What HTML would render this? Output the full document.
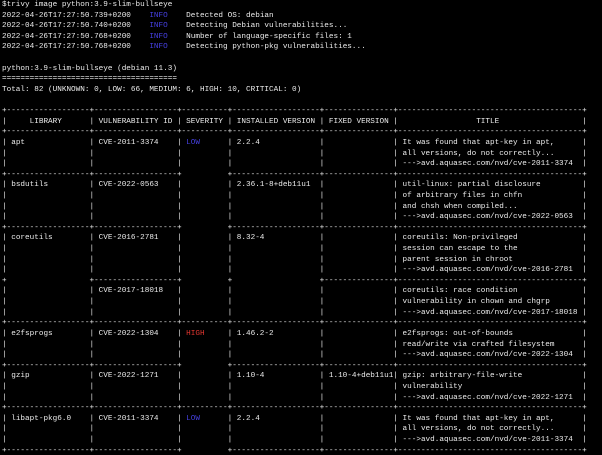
<!DOCTYPE html>
<html><head><meta charset="utf-8"><style>
html,body{margin:0;padding:0;background:#000;width:602px;height:455px;overflow:hidden}
body{padding-left:2px;font-family:"Liberation Mono",monospace;font-size:7.68px;line-height:10.61px;color:#ececec}
div{height:10.61px;white-space:pre}
i{font-style:normal;display:inline-block;white-space:pre}
.a,.b{width:18ch}.c{width:10ch}.d{width:19ch}.e{width:15ch}.f{width:40ch}
.bl{color:#4540e0}.rd{color:#e0352f}
</style></head><body>
<div>$trivy image python:3.9-slim-bullseye</div>
<div>2022-04-26T17:27:50.739+0200    <span class="bl">INFO</span>    Detected OS: debian</div>
<div>2022-04-26T17:27:50.740+0200    <span class="bl">INFO</span>    Detecting Debian vulnerabilities...</div>
<div>2022-04-26T17:27:50.768+0200    <span class="bl">INFO</span>    Number of language-specific files: 1</div>
<div>2022-04-26T17:27:50.768+0200    <span class="bl">INFO</span>    Detecting python-pkg vulnerabilities...</div>
<div> </div>
<div>python:3.9-slim-bullseye (debian 11.3)</div>
<div>======================================</div>
<div>Total: 82 (UNKNOWN: 0, LOW: 66, MEDIUM: 6, HIGH: 10, CRITICAL: 0)</div>
<div> </div>
<div>+------------------+------------------+----------+-------------------+---------------+----------------------------------------+</div>
<div>|<i class="a">     LIBRARY</i>|<i class="b"> VULNERABILITY ID</i>|<i class="c"> SEVERITY</i>|<i class="d"> INSTALLED VERSION</i>|<i class="e"> FIXED VERSION</i>|<i class="f">                 TITLE</i>|</div>
<div>+------------------+------------------+----------+-------------------+---------------+----------------------------------------+</div>
<div>|<i class="a"> apt</i>|<i class="b"> CVE-2011-3374</i>|<i class="c"> <span class="bl">LOW</span></i>|<i class="d"> 2.2.4</i>|<i class="e"> </i>|<i class="f"> It was found that apt-key in apt,</i>|</div>
<div>|<i class="a"> </i>|<i class="b"> </i>|<i class="c"> </i>|<i class="d"> </i>|<i class="e"> </i>|<i class="f"> all versions, do not correctly...</i>|</div>
<div>|<i class="a"> </i>|<i class="b"> </i>|<i class="c"> </i>|<i class="d"> </i>|<i class="e"> </i>|<i class="f"> --->avd.aquasec.com/nvd/cve-2011-3374</i>|</div>
<div>+------------------+------------------+<i class="c"> </i>+-------------------+---------------+----------------------------------------+</div>
<div>|<i class="a"> bsdutils</i>|<i class="b"> CVE-2022-0563</i>|<i class="c"> </i>|<i class="d"> 2.36.1-8+deb11u1</i>|<i class="e"> </i>|<i class="f"> util-linux: partial disclosure</i>|</div>
<div>|<i class="a"> </i>|<i class="b"> </i>|<i class="c"> </i>|<i class="d"> </i>|<i class="e"> </i>|<i class="f"> of arbitrary files in chfn</i>|</div>
<div>|<i class="a"> </i>|<i class="b"> </i>|<i class="c"> </i>|<i class="d"> </i>|<i class="e"> </i>|<i class="f"> and chsh when compiled...</i>|</div>
<div>|<i class="a"> </i>|<i class="b"> </i>|<i class="c"> </i>|<i class="d"> </i>|<i class="e"> </i>|<i class="f"> --->avd.aquasec.com/nvd/cve-2022-0563</i>|</div>
<div>+------------------+------------------+<i class="c"> </i>+-------------------+---------------+----------------------------------------+</div>
<div>|<i class="a"> coreutils</i>|<i class="b"> CVE-2016-2781</i>|<i class="c"> </i>|<i class="d"> 8.32-4</i>|<i class="e"> </i>|<i class="f"> coreutils: Non-privileged</i>|</div>
<div>|<i class="a"> </i>|<i class="b"> </i>|<i class="c"> </i>|<i class="d"> </i>|<i class="e"> </i>|<i class="f"> session can escape to the</i>|</div>
<div>|<i class="a"> </i>|<i class="b"> </i>|<i class="c"> </i>|<i class="d"> </i>|<i class="e"> </i>|<i class="f"> parent session in chroot</i>|</div>
<div>|<i class="a"> </i>|<i class="b"> </i>|<i class="c"> </i>|<i class="d"> </i>|<i class="e"> </i>|<i class="f"> --->avd.aquasec.com/nvd/cve-2016-2781</i>|</div>
<div>+<i class="a"> </i>+------------------+<i class="c"> </i>+<i class="d"> </i>+---------------+----------------------------------------+</div>
<div>|<i class="a"> </i>|<i class="b"> CVE-2017-18018</i>|<i class="c"> </i>|<i class="d"> </i>|<i class="e"> </i>|<i class="f"> coreutils: race condition</i>|</div>
<div>|<i class="a"> </i>|<i class="b"> </i>|<i class="c"> </i>|<i class="d"> </i>|<i class="e"> </i>|<i class="f"> vulnerability in chown and chgrp</i>|</div>
<div>|<i class="a"> </i>|<i class="b"> </i>|<i class="c"> </i>|<i class="d"> </i>|<i class="e"> </i>|<i class="f"> --->avd.aquasec.com/nvd/cve-2017-18018</i>|</div>
<div>+------------------+------------------+----------+-------------------+---------------+----------------------------------------+</div>
<div>|<i class="a"> e2fsprogs</i>|<i class="b"> CVE-2022-1304</i>|<i class="c"> <span class="rd">HIGH</span></i>|<i class="d"> 1.46.2-2</i>|<i class="e"> </i>|<i class="f"> e2fsprogs: out-of-bounds</i>|</div>
<div>|<i class="a"> </i>|<i class="b"> </i>|<i class="c"> </i>|<i class="d"> </i>|<i class="e"> </i>|<i class="f"> read/write via crafted filesystem</i>|</div>
<div>|<i class="a"> </i>|<i class="b"> </i>|<i class="c"> </i>|<i class="d"> </i>|<i class="e"> </i>|<i class="f"> --->avd.aquasec.com/nvd/cve-2022-1304</i>|</div>
<div>+------------------+------------------+<i class="c"> </i>+-------------------+---------------+----------------------------------------+</div>
<div>|<i class="a"> gzip</i>|<i class="b"> CVE-2022-1271</i>|<i class="c"> </i>|<i class="d"> 1.10-4</i>|<i class="e"> 1.10-4+deb11u1</i>|<i class="f"> gzip: arbitrary-file-write</i>|</div>
<div>|<i class="a"> </i>|<i class="b"> </i>|<i class="c"> </i>|<i class="d"> </i>|<i class="e"> </i>|<i class="f"> vulnerability</i>|</div>
<div>|<i class="a"> </i>|<i class="b"> </i>|<i class="c"> </i>|<i class="d"> </i>|<i class="e"> </i>|<i class="f"> --->avd.aquasec.com/nvd/cve-2022-1271</i>|</div>
<div>+------------------+------------------+----------+-------------------+---------------+----------------------------------------+</div>
<div>|<i class="a"> libapt-pkg6.0</i>|<i class="b"> CVE-2011-3374</i>|<i class="c"> <span class="bl">LOW</span></i>|<i class="d"> 2.2.4</i>|<i class="e"> </i>|<i class="f"> It was found that apt-key in apt,</i>|</div>
<div>|<i class="a"> </i>|<i class="b"> </i>|<i class="c"> </i>|<i class="d"> </i>|<i class="e"> </i>|<i class="f"> all versions, do not correctly...</i>|</div>
<div>|<i class="a"> </i>|<i class="b"> </i>|<i class="c"> </i>|<i class="d"> </i>|<i class="e"> </i>|<i class="f"> --->avd.aquasec.com/nvd/cve-2011-3374</i>|</div>
<div>+------------------+------------------+<i class="c"> </i>+-------------------+---------------+----------------------------------------+</div>
</body></html>
